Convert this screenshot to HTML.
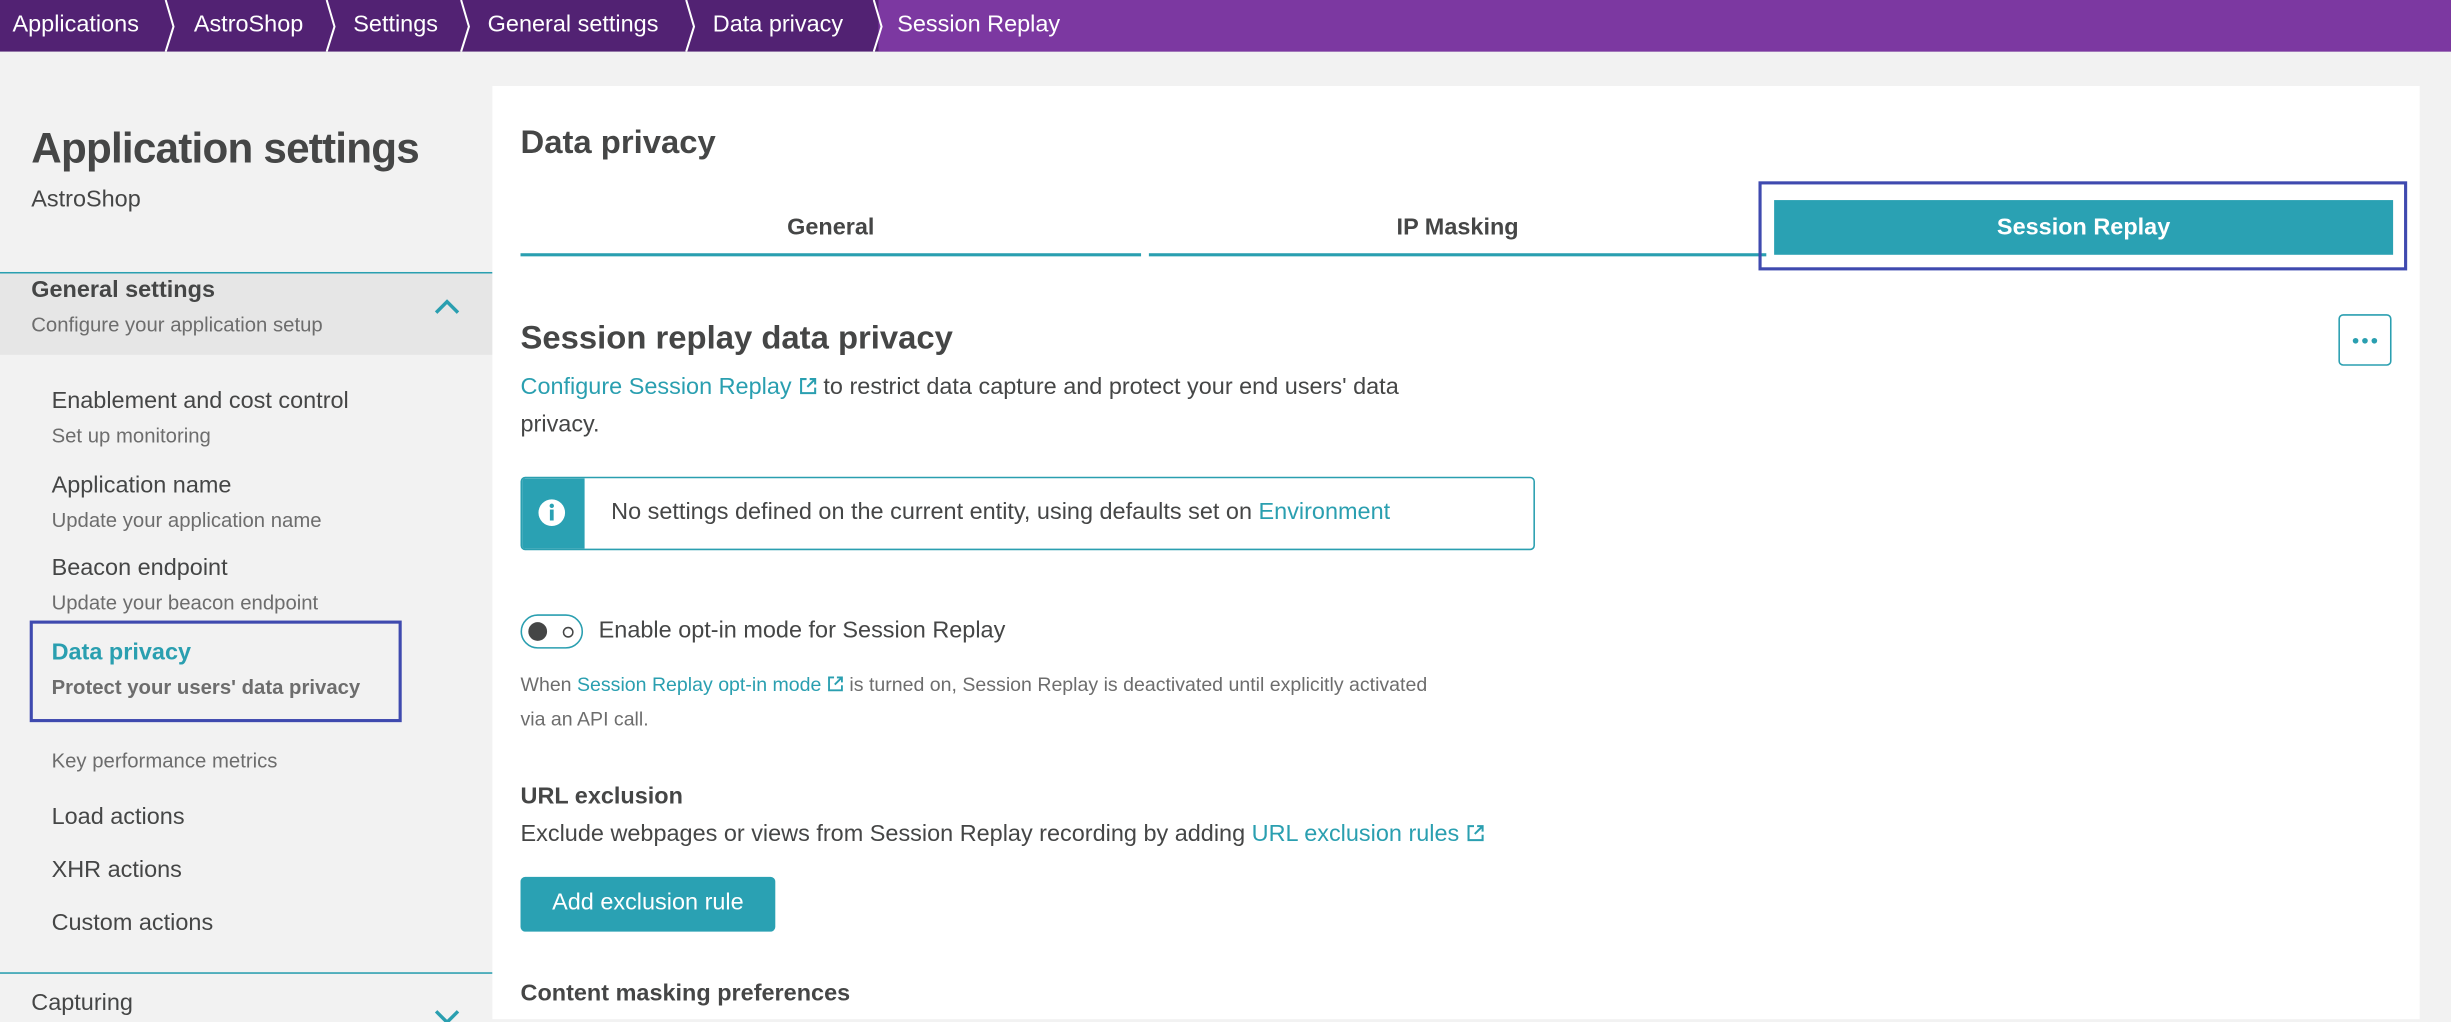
<!DOCTYPE html>
<html><head><meta charset="utf-8">
<style>
html,body{margin:0;padding:0;width:2451px;height:1019px;overflow:hidden;background:#f2f2f2}
#w{position:absolute;left:0;top:0;width:1568px;height:652px;transform:scale(1.5631);transform-origin:0 0;font-family:"Liberation Sans",sans-serif;color:#454646;background:#f2f2f2}
.t{position:absolute;white-space:nowrap;line-height:20px}
.a{color:#2a9fb0}
.g{color:#6d6d6d}
.b{font-weight:bold}
</style></head><body><div id="w">
<div style="position:absolute;left:0;top:0;width:1568px;height:33px;background:#522273"></div>
<div style="position:absolute;left:562px;top:0;width:1006px;height:33px;background:#7c38a1"></div>
<svg style="position:absolute;left:0;top:0" width="1568" height="33"><g fill="none" stroke="#fff" stroke-width="1.3">
<polyline points="106,0 111,17 106,33"/><polyline points="209,0 214,17 209,33"/><polyline points="295,0 300,17 295,33"/><polyline points="439,0 444,17 439,33"/><polyline points="559,0 564,17 559,33"/></g></svg>
<div class="t" style="left:8px;top:6px;color:#fff;font-size:15px">Applications</div>
<div class="t" style="left:124px;top:6px;color:#fff;font-size:15px">AstroShop</div>
<div class="t" style="left:226px;top:6px;color:#fff;font-size:15px">Settings</div>
<div class="t" style="left:312px;top:6px;color:#fff;font-size:15px">General settings</div>
<div class="t" style="left:456px;top:6px;color:#fff;font-size:15px">Data privacy</div>
<div class="t" style="left:574px;top:6px;color:#fff;font-size:15px">Session Replay</div>

<div class="t" style="left:20px;top:78px;font-size:27px;line-height:34px;font-weight:bold;color:#454646;letter-spacing:-0.5px">Application settings</div>
<div class="t" style="left:20px;top:118px;font-size:15px">AstroShop</div>
<div style="position:absolute;left:0;top:174px;width:315px;height:1px;background:#2a9fb0"></div>
<div style="position:absolute;left:0;top:175px;width:315px;height:52px;background:#e6e6e6"></div>
<div class="t b" style="left:20px;top:176px;font-size:15px">General settings</div>
<div class="t g" style="left:20px;top:198px;font-size:13px">Configure your application setup</div>
<svg style="position:absolute;left:278px;top:190px" width="16" height="12"><polyline points="1,10 8,3 15,10" fill="none" stroke="#2a9fb0" stroke-width="2.2"/></svg>
<div class="t" style="left:33px;top:247px;font-size:15px">Enablement and cost control</div>
<div class="t g" style="left:33px;top:269px;font-size:13px">Set up monitoring</div>
<div class="t" style="left:33px;top:301px;font-size:15px">Application name</div>
<div class="t g" style="left:33px;top:323px;font-size:13px">Update your application name</div>
<div class="t" style="left:33px;top:354px;font-size:15px">Beacon endpoint</div>
<div class="t g" style="left:33px;top:376px;font-size:13px">Update your beacon endpoint</div>
<div style="position:absolute;left:19px;top:397px;width:234px;height:61px;border:2px solid #3f4aaf"></div>
<div class="t b a" style="left:33px;top:408px;font-size:15px">Data privacy</div>
<div class="t b g" style="left:33px;top:430px;font-size:13px">Protect your users' data privacy</div>
<div class="t g" style="left:33px;top:477px;font-size:13px">Key performance metrics</div>
<div class="t" style="left:33px;top:513px;font-size:15px">Load actions</div>
<div class="t" style="left:33px;top:547px;font-size:15px">XHR actions</div>
<div class="t" style="left:33px;top:581px;font-size:15px">Custom actions</div>
<div style="position:absolute;left:0;top:622px;width:315px;height:1px;background:#2a9fb0"></div>
<div class="t" style="left:20px;top:632px;font-size:15px">Capturing</div>
<svg style="position:absolute;left:278px;top:646px" width="16" height="8"><polyline points="1,1 8,8 15,1" fill="none" stroke="#2a9fb0" stroke-width="2.2"/></svg>

<div style="position:absolute;left:315px;top:55px;width:1233px;height:597px;background:#fff"></div>
<div class="t b" style="left:333px;top:79px;font-size:21px;line-height:26px">Data privacy</div>
<div class="t b" style="left:333px;top:136px;width:397px;text-align:center;font-size:15px">General</div>
<div style="position:absolute;left:333px;top:162px;width:397px;height:2px;background:#2a9fb0"></div>
<div class="t b" style="left:735px;top:136px;width:395px;text-align:center;font-size:15px">IP Masking</div>
<div style="position:absolute;left:735px;top:162px;width:395px;height:2px;background:#2a9fb0"></div>
<div style="position:absolute;left:1135px;top:128px;width:396px;height:35px;background:#2aa1b3"></div>
<div class="t b" style="left:1135px;top:136px;width:396px;text-align:center;font-size:15px;color:#fff">Session Replay</div>
<div style="position:absolute;left:1125px;top:116px;width:411px;height:53px;border:2px solid #3f4aaf"></div>

<div class="t b" style="left:333px;top:204px;font-size:21px;line-height:26px">Session replay data privacy</div>
<div style="position:absolute;left:1496px;top:201px;width:34px;height:33px;border:1px solid #2a9fb0;border-radius:3px;box-sizing:border-box"></div>
<svg style="position:absolute;left:1496px;top:201px" width="35" height="34"><g fill="#2a9fb0"><circle cx="11" cy="17" r="1.8"/><circle cx="17" cy="17" r="1.8"/><circle cx="23" cy="17" r="1.8"/></g></svg>
<div class="t" style="left:333px;top:238px;font-size:15px"><span class="a">Configure Session Replay <svg width="12" height="12" viewBox="0 0 12 12" style="vertical-align:-1px"><path d="M5 1.5H1.5v9h9V7M7 1.5h3.5V5M10.5 1.5 5.5 6.5" fill="none" stroke="#2a9fb0" stroke-width="1.3"/></svg></span> to restrict data capture and protect your end users' data</div>
<div class="t" style="left:333px;top:262px;font-size:15px">privacy.</div>

<div style="position:absolute;left:333px;top:305px;width:649px;height:47px;border:1px solid #2a9fb0;border-radius:3px;box-sizing:border-box;overflow:hidden"><div style="width:40px;height:100%;background:#2aa1b3"></div></div>
<svg style="position:absolute;left:343px;top:318px" width="20" height="20"><circle cx="10" cy="10" r="8.5" fill="#fff"/><circle cx="10" cy="5.6" r="1.4" fill="#2aa1b3"/><rect x="8.8" y="8" width="2.4" height="7" fill="#2aa1b3"/></svg>
<div class="t" style="left:391px;top:318px;font-size:15px">No settings defined on the current entity, using defaults set on <span class="a">Environment</span></div>

<div style="position:absolute;left:333px;top:393px;width:40px;height:22px;border:1px solid #2a9fb0;border-radius:11px;box-sizing:border-box"></div>
<div style="position:absolute;left:338px;top:398px;width:12px;height:12px;border-radius:50%;background:#454646"></div>
<div style="position:absolute;left:360px;top:401px;width:5px;height:5px;border-radius:50%;border:1px solid #454646"></div>
<div class="t" style="left:383px;top:394px;font-size:15px">Enable opt-in mode for Session Replay</div>
<div class="t g" style="left:333px;top:428px;font-size:12.5px">When <span class="a">Session Replay opt-in mode <svg width="11" height="11" viewBox="0 0 12 12" style="vertical-align:-1px"><path d="M5 1.5H1.5v9h9V7M7 1.5h3.5V5M10.5 1.5 5.5 6.5" fill="none" stroke="#2a9fb0" stroke-width="1.3"/></svg></span> is turned on, Session Replay is deactivated until explicitly activated</div>
<div class="t g" style="left:333px;top:450px;font-size:12.5px">via an API call.</div>

<div class="t b" style="left:333px;top:500px;font-size:15px">URL exclusion</div>
<div class="t" style="left:333px;top:524px;font-size:15px">Exclude webpages or views from Session Replay recording by adding <span class="a">URL exclusion rules <svg width="12" height="12" viewBox="0 0 12 12" style="vertical-align:-1px"><path d="M5 1.5H1.5v9h9V7M7 1.5h3.5V5M10.5 1.5 5.5 6.5" fill="none" stroke="#2a9fb0" stroke-width="1.3"/></svg></span></div>
<div style="position:absolute;left:333px;top:561px;width:163px;height:35px;background:#2aa1b3;border-radius:3px"></div>
<div class="t" style="left:333px;top:568px;width:163px;text-align:center;font-size:15px;color:#fff">Add exclusion rule</div>
<div class="t b" style="left:333px;top:626px;font-size:15px">Content masking preferences</div>
</div></body></html>
